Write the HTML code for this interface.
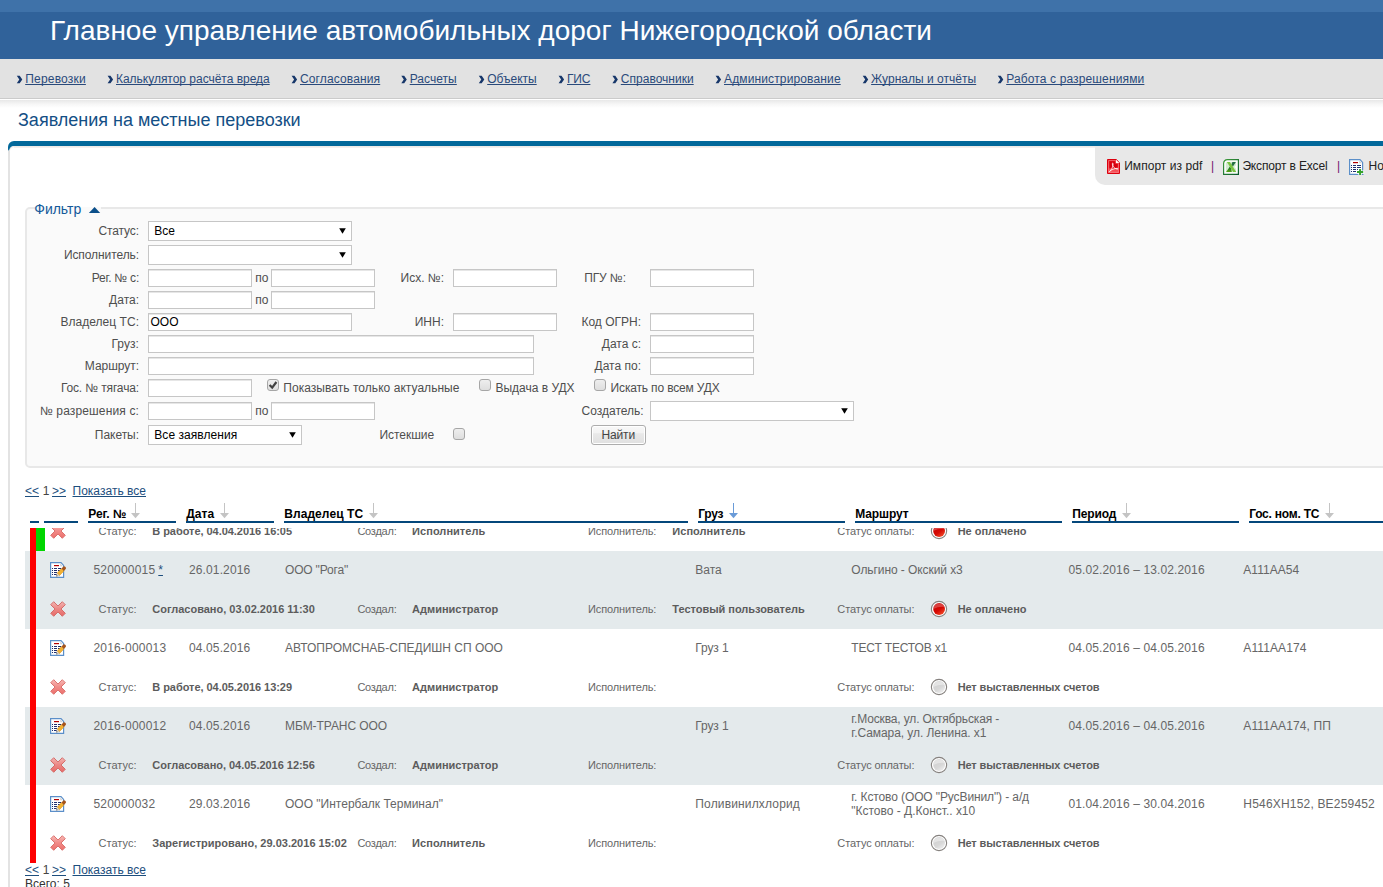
<!DOCTYPE html>
<html lang="ru">
<head>
<meta charset="utf-8">
<title>Заявления на местные перевозки</title>
<style>
*{box-sizing:border-box}
html,body{margin:0;padding:0}
body{width:1383px;height:887px;overflow:hidden;position:relative;background:#fff;font-family:"Liberation Sans",Arial,sans-serif;font-size:12px;color:#444}
.a,.t{position:absolute;white-space:nowrap}
.t{line-height:14px}
a.t,.t a{color:#1d4e7d;text-decoration:underline;text-decoration-skip-ink:none}
#top1{left:0;top:0;width:1383px;height:12px;background:#3f72a9}
#top2{left:0;top:12px;width:1383px;height:47px;background:#30629a}
#nav{left:0;top:59px;width:1383px;height:40px;background:#e2e2e2;border-bottom:1px solid #cbcbcb}
#navsh{left:0;top:100px;width:1383px;height:8px;background:linear-gradient(#e8e8e8,#f6f6f6 50%,#fff)}
a.nv{color:#2a4a7b}
#panel{left:8px;top:150px;width:2px;height:760px;background:#e3e3e3}
#ptop{left:16px;top:141px;width:1380px;height:5px;background:#02689a}
#ptop2{left:14px;top:146px;width:1081px;height:2px;background:linear-gradient(#ebe6e3,#f6f3f2)}
#tb{left:1095px;top:146px;width:300px;height:39px;background:#e8e8e8;border-radius:0 0 0 10px}
#fs{left:25px;top:207px;width:1400px;height:261px;border:2px solid #e8e8e8;border-radius:5px;background:#fafafa}
#lgbg{left:35px;top:207px;width:65.5px;height:2px;background:#fafafa}
.in{position:absolute;background:#fff;border:1px solid #c6c6c6;height:18px;box-shadow:inset 0 1px 0 #e6e6e6}
.sel{position:absolute;background:#fff;border:1px solid #c6c6c6;height:20px}
.sel svg{position:absolute;right:5px;top:6px}
.cb{position:absolute;width:12px;height:12px;border:1px solid #a6a6a6;border-radius:3px;background:linear-gradient(#eeeeee,#dedede)}
#btn{left:591px;top:425px;width:55px;height:20px;border:1px solid #adadad;border-radius:3px;box-shadow:inset 0 0 0 1px #fff;background:linear-gradient(#f8f8f8 0%,#f3f3f3 40%,#e9e9e9 42%,#e0e0e0 100%)}
.hl{position:absolute;top:521px;height:2px;background:#04477b}
#scr{left:0;top:528px;width:1383px;height:359px;overflow:hidden}
.g{position:absolute;left:25px;width:1400px;height:78px;background:#e4eaec}
.ic{position:absolute;display:block}
</style>
</head>
<body>
<div class="a" id="top1"></div>
<div class="a" id="top2"></div>
<div class="a" id="nav"></div>
<div class="a" id="navsh"></div>
<div class="a" id="panel"></div>
<div class="a" id="ptop"></div>
<div class="a" id="ptop2"></div>
<svg class="ic" style="left:8px;top:141px" width="8" height="10" viewBox="0 0 8 10"><path d="M0 10V7.5Q0.8 5.4 3 5.6L3.6 6.6Q2 7 2 10Z" fill="#e3e3e3"/><path d="M0.3 9.4Q-0.2 8 0 6A6 6 0 0 1 6 0H8V5H6.4Q2.4 5 1.4 8.2Q1 9.4 0.3 9.4Z" fill="#02689a"/><path d="M8 5.5H6.4Q3.4 5.6 2.3 8" fill="none" stroke="#eeeae8" stroke-width="1"/></svg>
<div class="a" id="tb"></div>
<div class="a" id="fs"></div>
<div class="a" id="lgbg"></div>
<svg class="ic" style="left:16px;top:75px" width="7" height="9" viewBox="0 0 7 9"><g transform="translate(0.8 0.65)"><path d="M0 0H2.9L5.5 3.75L2.9 7.5H0L2.5 3.75Z" fill="#17376a"/></g></svg>
<svg class="ic" style="left:107px;top:75px" width="7" height="9" viewBox="0 0 7 9"><g transform="translate(0.6 0.65)"><path d="M0 0H2.9L5.5 3.75L2.9 7.5H0L2.5 3.75Z" fill="#17376a"/></g></svg>
<svg class="ic" style="left:291px;top:75px" width="7" height="9" viewBox="0 0 7 9"><g transform="translate(0.6 0.65)"><path d="M0 0H2.9L5.5 3.75L2.9 7.5H0L2.5 3.75Z" fill="#17376a"/></g></svg>
<svg class="ic" style="left:401px;top:75px" width="7" height="9" viewBox="0 0 7 9"><g transform="translate(0.3 0.65)"><path d="M0 0H2.9L5.5 3.75L2.9 7.5H0L2.5 3.75Z" fill="#17376a"/></g></svg>
<svg class="ic" style="left:478px;top:75px" width="7" height="9" viewBox="0 0 7 9"><g transform="translate(0.8 0.65)"><path d="M0 0H2.9L5.5 3.75L2.9 7.5H0L2.5 3.75Z" fill="#17376a"/></g></svg>
<svg class="ic" style="left:558px;top:75px" width="7" height="9" viewBox="0 0 7 9"><g transform="translate(0.6 0.65)"><path d="M0 0H2.9L5.5 3.75L2.9 7.5H0L2.5 3.75Z" fill="#17376a"/></g></svg>
<svg class="ic" style="left:612px;top:75px" width="7" height="9" viewBox="0 0 7 9"><g transform="translate(0.4 0.65)"><path d="M0 0H2.9L5.5 3.75L2.9 7.5H0L2.5 3.75Z" fill="#17376a"/></g></svg>
<svg class="ic" style="left:715px;top:75px" width="7" height="9" viewBox="0 0 7 9"><g transform="translate(0.6 0.65)"><path d="M0 0H2.9L5.5 3.75L2.9 7.5H0L2.5 3.75Z" fill="#17376a"/></g></svg>
<svg class="ic" style="left:862px;top:75px" width="7" height="9" viewBox="0 0 7 9"><g transform="translate(0.7 0.65)"><path d="M0 0H2.9L5.5 3.75L2.9 7.5H0L2.5 3.75Z" fill="#17376a"/></g></svg>
<svg class="ic" style="left:997px;top:75px" width="7" height="9" viewBox="0 0 7 9"><g transform="translate(0.8 0.65)"><path d="M0 0H2.9L5.5 3.75L2.9 7.5H0L2.5 3.75Z" fill="#17376a"/></g></svg>
<svg class="ic" style="left:1106px;top:158px" width="15" height="17" viewBox="0 0 15 17">
<defs><linearGradient id="pg" x1="0" y1="0" x2="0" y2="1"><stop offset="0" stop-color="#e8202a"/><stop offset="0.6" stop-color="#f03c44"/><stop offset="1" stop-color="#fa6066"/></linearGradient></defs>
<path d="M1.5 1.5H10.2L13.5 4.8V15.5H1.5Z" fill="url(#pg)" stroke="#dc000e" stroke-width="1"/>
<path d="M2.6 2.6H9.6V5.4H12.4V14.4H2.6Z" fill="none" stroke="#f6868a" stroke-width="0.7" opacity="0.85"/>
<path d="M3.3 3.3H9.4V5.8H11.7V9.6Q7.5 10.6 3.3 10.2Z" fill="#d9000f"/>
<path d="M10 1.7V5H13.3Z" fill="#fff"/>
<path d="M3.4 13.6C5.6 11.6 6.9 9.2 7.1 6C7.2 4.8 6.3 4.8 6.3 6C6.5 8.4 8 10.4 11.2 11.2C12.2 11.4 12.2 10.4 11 10.4C8.6 10.5 5.4 11.6 3.4 13.6Z" fill="none" stroke="#fff" stroke-width="0.85" stroke-linejoin="round" opacity="0.92"/>
</svg>
<svg class="ic" style="left:1223px;top:159px" width="16" height="16" viewBox="0 0 16 16">
<defs><linearGradient id="xg" x1="0" y1="0" x2="1" y2="1"><stop offset="0" stop-color="#3f9c3c"/><stop offset="1" stop-color="#0a5a2c"/></linearGradient>
<linearGradient id="xg2" x1="0" y1="0" x2="0" y2="1"><stop offset="0" stop-color="#0c6a2c"/><stop offset="1" stop-color="#58a414"/></linearGradient></defs>
<path d="M4.4 0.6H15.4V15.4H0.6V4.4Q0.8 0.8 4.4 0.6Z" fill="#fff" stroke="url(#xg)" stroke-width="1.2"/>
<path d="M2.8 4.6Q3 3 4.6 2.8H13.1V13.2H2.8Z" fill="#d3ebd0"/>
<path d="M9.4 3.1H12.9L9.9 7.4L8.4 5.4Z" fill="#246f42"/>
<path d="M6.9 7.6L8.3 9.8L8.8 12.9H3.1Z" fill="url(#xg2)"/>
<path d="M3.9 2.95H6.9L13.2 12.9H10.2Z" fill="#79c440"/>
<path d="M11.2 8L13.7 5.6V10.4Z" fill="#fff" opacity="0.85"/>
</svg>
<svg class="ic" style="left:1349px;top:159px" width="16" height="16" viewBox="0 0 16 16">
<path d="M0.6 0.6H11L13.6 3.4V15.4H0.6Z" fill="#fff" stroke="#5b8fc9" stroke-width="1.2"/>
<path d="M10.2 1.2V4.2H13Z" fill="#d4d4d4"/>
<rect x="4" y="3" width="5" height="1.2" fill="#b30000"/><rect x="2" y="6" width="1" height="1" fill="#1f2f6f"/><rect x="4" y="6" width="3" height="1" fill="#1f2f6f"/><rect x="2" y="8" width="1" height="1" fill="#1f2f6f"/><rect x="4" y="8" width="3" height="1" fill="#1f2f6f"/><rect x="2" y="10" width="1" height="1" fill="#1f2f6f"/><rect x="4" y="10" width="3" height="1" fill="#1f2f6f"/><rect x="2" y="12" width="1" height="1" fill="#1f2f6f"/><rect x="4" y="12" width="3" height="1" fill="#1f2f6f"/>
<rect x="8" y="6" width="4" height="1" fill="#1f2f6f"/><rect x="8" y="8" width="4" height="1" fill="#1f2f6f"/><rect x="8" y="10" width="1" height="1" fill="#1f2f6f"/>
<path d="M9.4 9.4H12.8V11.4H15.2V14.8H12.8V16.5H9.4V14.8H7.6V11.4H9.4Z" fill="#fff"/>
<path d="M10.1 10H12.1V12.1H14.2V14.1H12.1V16H10.1V14.1H8V12.1H10.1Z" fill="#36a22e"/>
<rect x="13.2" y="15" width="1.2" height="1" fill="#5b8fc9"/>
</svg>
<svg class="ic" style="left:88px;top:206px" width="13" height="8" viewBox="0 0 13 8"><g transform="translate(0.9 0.9)"><path d="M0 6.2L5.65 0L11.3 6.2Z" fill="#0b4f8a"/></g></svg>
<div class="sel" style="left:148px;top:221px;width:204px"><svg width="7" height="6" viewBox="0 0 7 6"><path d="M0.2 0.3H6.8L3.5 5.8Z" fill="#000"/></svg></div>
<div class="sel" style="left:148px;top:245px;width:204px"><svg width="7" height="6" viewBox="0 0 7 6"><path d="M0.2 0.3H6.8L3.5 5.8Z" fill="#000"/></svg></div>
<div class="in" style="left:148px;top:269px;width:104px"></div>
<div class="in" style="left:271px;top:269px;width:104px"></div>
<div class="in" style="left:453px;top:269px;width:104px"></div>
<div class="in" style="left:650px;top:269px;width:104px"></div>
<div class="in" style="left:148px;top:291px;width:104px"></div>
<div class="in" style="left:271px;top:291px;width:104px"></div>
<div class="in" style="left:148px;top:313px;width:204px"></div>
<div class="in" style="left:453px;top:313px;width:104px"></div>
<div class="in" style="left:650px;top:313px;width:104px"></div>
<div class="in" style="left:148px;top:335px;width:386px"></div>
<div class="in" style="left:650px;top:335px;width:104px"></div>
<div class="in" style="left:148px;top:357px;width:386px"></div>
<div class="in" style="left:650px;top:357px;width:104px"></div>
<div class="in" style="left:148px;top:379px;width:104px"></div>
<div class="in" style="left:148px;top:402px;width:104px"></div>
<div class="in" style="left:271px;top:402px;width:104px"></div>
<div class="sel" style="left:148px;top:425px;width:154px"><svg width="7" height="6" viewBox="0 0 7 6"><path d="M0.2 0.3H6.8L3.5 5.8Z" fill="#000"/></svg></div>
<div class="sel" style="left:650px;top:401px;width:204px"><svg width="7" height="6" viewBox="0 0 7 6"><path d="M0.2 0.3H6.8L3.5 5.8Z" fill="#000"/></svg></div>
<div class="cb" style="left:267px;top:379px"><svg width="10" height="10" viewBox="0 0 10 10" style="display:block"><path d="M1.6 5L4.2 7.6L8.4 2" fill="none" stroke="#404040" stroke-width="2.2"/></svg></div>
<div class="cb" style="left:479px;top:379px"></div>
<div class="cb" style="left:594px;top:379px"></div>
<div class="cb" style="left:453px;top:428px"></div>
<div class="a" id="btn"></div>
<div class="hl" style="left:30px;width:9px"></div>
<div class="hl" style="left:44px;width:34px"></div>
<div class="hl" style="left:88px;width:88px"></div>
<svg class="ic" style="left:131px;top:503px" width="10" height="16" viewBox="0 0 10 16"><rect x="4" y="0" width="1" height="12" fill="#c4c4c4"/><path d="M0 10H9L4.5 15.3Z" fill="#c4c4c4"/></svg>
<div class="hl" style="left:186px;width:88px"></div>
<svg class="ic" style="left:220px;top:503px" width="10" height="16" viewBox="0 0 10 16"><rect x="4" y="0" width="1" height="12" fill="#c4c4c4"/><path d="M0 10H9L4.5 15.3Z" fill="#c4c4c4"/></svg>
<div class="hl" style="left:284px;width:404px"></div>
<svg class="ic" style="left:369px;top:503px" width="10" height="16" viewBox="0 0 10 16"><rect x="4" y="0" width="1" height="12" fill="#c4c4c4"/><path d="M0 10H9L4.5 15.3Z" fill="#c4c4c4"/></svg>
<div class="hl" style="left:698px;width:147px"></div>
<svg class="ic" style="left:729px;top:503px" width="10" height="16" viewBox="0 0 10 16"><rect x="4" y="0" width="1" height="12" fill="#6a9bd8"/><path d="M0 10H9L4.5 15.3Z" fill="#6a9bd8"/></svg>
<div class="hl" style="left:855px;width:207px"></div>
<div class="hl" style="left:1072px;width:167px"></div>
<svg class="ic" style="left:1122px;top:503px" width="10" height="16" viewBox="0 0 10 16"><rect x="4" y="0" width="1" height="12" fill="#c4c4c4"/><path d="M0 10H9L4.5 15.3Z" fill="#c4c4c4"/></svg>
<div class="hl" style="left:1249px;width:151px"></div>
<svg class="ic" style="left:1325px;top:503px" width="10" height="16" viewBox="0 0 10 16"><rect x="4" y="0" width="1" height="12" fill="#c4c4c4"/><path d="M0 10H9L4.5 15.3Z" fill="#c4c4c4"/></svg>
<div class="g" style="top:551px"></div>
<div class="g" style="top:707px"></div>
<div class="a" style="left:30px;top:528px;width:6px;height:335px;background:#fe0000"></div>
<div class="a" style="left:36px;top:528px;width:9px;height:23px;background:#00d600"></div>
<svg class="ic" style="left:50px;top:562px" width="17" height="16" viewBox="0 0 17 16">
<path d="M0.6 0.6H11L13.6 3.4V15.4H0.6Z" fill="#fff" stroke="#5b8fc9" stroke-width="1.2"/>
<path d="M10.2 1.2V4.2H13Z" fill="#d4d4d4"/>
<rect x="4" y="3" width="5" height="1.2" fill="#b30000"/><rect x="2" y="6" width="1" height="1" fill="#1f2f6f"/><rect x="4" y="6" width="3" height="1" fill="#1f2f6f"/><rect x="2" y="8" width="1" height="1" fill="#1f2f6f"/><rect x="4" y="8" width="3" height="1" fill="#1f2f6f"/><rect x="2" y="10" width="1" height="1" fill="#1f2f6f"/><rect x="4" y="10" width="3" height="1" fill="#1f2f6f"/><rect x="2" y="12" width="1" height="1" fill="#1f2f6f"/><rect x="4" y="12" width="3" height="1" fill="#1f2f6f"/>
<rect x="8" y="6" width="3" height="1" fill="#1f2f6f"/><rect x="8" y="8" width="2" height="1" fill="#1f2f6f"/>
<path d="M6.96 11.34L11.5 6.55L13.96 8.89L9.42 13.68Z" fill="#f3b234" stroke="#d28c14" stroke-width="0.5"/>
<path d="M11.5 6.55L13.43 4.52Q14.4 3.9 15.2 4.8Q16.4 5.9 15.89 6.86L13.96 8.89Z" fill="#a5541b"/>
<path d="M6.96 11.34L9.42 13.68L6.4 14.4Z" fill="#f4ead8" stroke="#a0a0a0" stroke-width="0.4"/>
<path d="M6.4 14.4L6.75 13.1L7.7 14.05Z" fill="#333"/>
</svg>
<svg class="ic" style="left:50px;top:601px;opacity:0.8" width="16" height="16" viewBox="0 0 16 16">
<defs><linearGradient id="xd551" x1="0" y1="0" x2="0" y2="1"><stop offset="0" stop-color="#f6a8a4"/><stop offset="0.5" stop-color="#ee6e6a"/><stop offset="1" stop-color="#e84c48"/></linearGradient></defs>
<path d="M3.7 0.7L8 5L12.3 0.7L15.3 3.7L11 8L15.3 12.3L12.3 15.3L8 11L3.7 15.3L0.7 12.3L5 8L0.7 3.7Z" fill="url(#xd551)" stroke="#cf4440" stroke-width="0.9" stroke-linejoin="round"/>
</svg>
<svg class="ic" style="left:930px;top:600px" width="18" height="18" viewBox="0 0 18 18">
<defs><linearGradient id="bl551" x1="0.2" y1="0.1" x2="0.8" y2="0.95"><stop offset="0" stop-color="#c80000"/><stop offset="0.55" stop-color="#d60a04"/><stop offset="1" stop-color="#f04a28"/></linearGradient></defs>
<circle cx="9" cy="9" r="7.65" fill="#fff" stroke="#86827f" stroke-width="1.1"/>
<circle cx="9.1" cy="9" r="5.9" fill="url(#bl551)"/>
<path d="M3.4 8.9A5.8 5.8 0 0 1 14.5 6.9Q8.5 6.3 3.4 8.9Z" fill="#fff" opacity="0.24"/>
</svg>
<svg class="ic" style="left:50px;top:640px" width="17" height="16" viewBox="0 0 17 16">
<path d="M0.6 0.6H11L13.6 3.4V15.4H0.6Z" fill="#fff" stroke="#5b8fc9" stroke-width="1.2"/>
<path d="M10.2 1.2V4.2H13Z" fill="#d4d4d4"/>
<rect x="4" y="3" width="5" height="1.2" fill="#b30000"/><rect x="2" y="6" width="1" height="1" fill="#1f2f6f"/><rect x="4" y="6" width="3" height="1" fill="#1f2f6f"/><rect x="2" y="8" width="1" height="1" fill="#1f2f6f"/><rect x="4" y="8" width="3" height="1" fill="#1f2f6f"/><rect x="2" y="10" width="1" height="1" fill="#1f2f6f"/><rect x="4" y="10" width="3" height="1" fill="#1f2f6f"/><rect x="2" y="12" width="1" height="1" fill="#1f2f6f"/><rect x="4" y="12" width="3" height="1" fill="#1f2f6f"/>
<rect x="8" y="6" width="3" height="1" fill="#1f2f6f"/><rect x="8" y="8" width="2" height="1" fill="#1f2f6f"/>
<path d="M6.96 11.34L11.5 6.55L13.96 8.89L9.42 13.68Z" fill="#f3b234" stroke="#d28c14" stroke-width="0.5"/>
<path d="M11.5 6.55L13.43 4.52Q14.4 3.9 15.2 4.8Q16.4 5.9 15.89 6.86L13.96 8.89Z" fill="#a5541b"/>
<path d="M6.96 11.34L9.42 13.68L6.4 14.4Z" fill="#f4ead8" stroke="#a0a0a0" stroke-width="0.4"/>
<path d="M6.4 14.4L6.75 13.1L7.7 14.05Z" fill="#333"/>
</svg>
<svg class="ic" style="left:50px;top:679px;opacity:0.8" width="16" height="16" viewBox="0 0 16 16">
<defs><linearGradient id="xd629" x1="0" y1="0" x2="0" y2="1"><stop offset="0" stop-color="#f6a8a4"/><stop offset="0.5" stop-color="#ee6e6a"/><stop offset="1" stop-color="#e84c48"/></linearGradient></defs>
<path d="M3.7 0.7L8 5L12.3 0.7L15.3 3.7L11 8L15.3 12.3L12.3 15.3L8 11L3.7 15.3L0.7 12.3L5 8L0.7 3.7Z" fill="url(#xd629)" stroke="#cf4440" stroke-width="0.9" stroke-linejoin="round"/>
</svg>
<svg class="ic" style="left:930px;top:678px" width="18" height="18" viewBox="0 0 18 18">
<defs><linearGradient id="bl629" x1="0.2" y1="0.1" x2="0.8" y2="0.95"><stop offset="0" stop-color="#d0d0d0"/><stop offset="0.6" stop-color="#d8d8d8"/><stop offset="1" stop-color="#ececec"/></linearGradient></defs>
<circle cx="9" cy="9" r="7.65" fill="#fff" stroke="#86827f" stroke-width="1.1"/>
<circle cx="9.1" cy="9" r="5.9" fill="url(#bl629)"/>
<path d="M3.4 8.9A5.8 5.8 0 0 1 14.5 6.9Q8.5 6.3 3.4 8.9Z" fill="#fff" opacity="0.4"/>
</svg>
<svg class="ic" style="left:50px;top:718px" width="17" height="16" viewBox="0 0 17 16">
<path d="M0.6 0.6H11L13.6 3.4V15.4H0.6Z" fill="#fff" stroke="#5b8fc9" stroke-width="1.2"/>
<path d="M10.2 1.2V4.2H13Z" fill="#d4d4d4"/>
<rect x="4" y="3" width="5" height="1.2" fill="#b30000"/><rect x="2" y="6" width="1" height="1" fill="#1f2f6f"/><rect x="4" y="6" width="3" height="1" fill="#1f2f6f"/><rect x="2" y="8" width="1" height="1" fill="#1f2f6f"/><rect x="4" y="8" width="3" height="1" fill="#1f2f6f"/><rect x="2" y="10" width="1" height="1" fill="#1f2f6f"/><rect x="4" y="10" width="3" height="1" fill="#1f2f6f"/><rect x="2" y="12" width="1" height="1" fill="#1f2f6f"/><rect x="4" y="12" width="3" height="1" fill="#1f2f6f"/>
<rect x="8" y="6" width="3" height="1" fill="#1f2f6f"/><rect x="8" y="8" width="2" height="1" fill="#1f2f6f"/>
<path d="M6.96 11.34L11.5 6.55L13.96 8.89L9.42 13.68Z" fill="#f3b234" stroke="#d28c14" stroke-width="0.5"/>
<path d="M11.5 6.55L13.43 4.52Q14.4 3.9 15.2 4.8Q16.4 5.9 15.89 6.86L13.96 8.89Z" fill="#a5541b"/>
<path d="M6.96 11.34L9.42 13.68L6.4 14.4Z" fill="#f4ead8" stroke="#a0a0a0" stroke-width="0.4"/>
<path d="M6.4 14.4L6.75 13.1L7.7 14.05Z" fill="#333"/>
</svg>
<svg class="ic" style="left:50px;top:757px;opacity:0.8" width="16" height="16" viewBox="0 0 16 16">
<defs><linearGradient id="xd707" x1="0" y1="0" x2="0" y2="1"><stop offset="0" stop-color="#f6a8a4"/><stop offset="0.5" stop-color="#ee6e6a"/><stop offset="1" stop-color="#e84c48"/></linearGradient></defs>
<path d="M3.7 0.7L8 5L12.3 0.7L15.3 3.7L11 8L15.3 12.3L12.3 15.3L8 11L3.7 15.3L0.7 12.3L5 8L0.7 3.7Z" fill="url(#xd707)" stroke="#cf4440" stroke-width="0.9" stroke-linejoin="round"/>
</svg>
<svg class="ic" style="left:930px;top:756px" width="18" height="18" viewBox="0 0 18 18">
<defs><linearGradient id="bl707" x1="0.2" y1="0.1" x2="0.8" y2="0.95"><stop offset="0" stop-color="#d0d0d0"/><stop offset="0.6" stop-color="#d8d8d8"/><stop offset="1" stop-color="#ececec"/></linearGradient></defs>
<circle cx="9" cy="9" r="7.65" fill="#fff" stroke="#86827f" stroke-width="1.1"/>
<circle cx="9.1" cy="9" r="5.9" fill="url(#bl707)"/>
<path d="M3.4 8.9A5.8 5.8 0 0 1 14.5 6.9Q8.5 6.3 3.4 8.9Z" fill="#fff" opacity="0.4"/>
</svg>
<svg class="ic" style="left:50px;top:796px" width="17" height="16" viewBox="0 0 17 16">
<path d="M0.6 0.6H11L13.6 3.4V15.4H0.6Z" fill="#fff" stroke="#5b8fc9" stroke-width="1.2"/>
<path d="M10.2 1.2V4.2H13Z" fill="#d4d4d4"/>
<rect x="4" y="3" width="5" height="1.2" fill="#b30000"/><rect x="2" y="6" width="1" height="1" fill="#1f2f6f"/><rect x="4" y="6" width="3" height="1" fill="#1f2f6f"/><rect x="2" y="8" width="1" height="1" fill="#1f2f6f"/><rect x="4" y="8" width="3" height="1" fill="#1f2f6f"/><rect x="2" y="10" width="1" height="1" fill="#1f2f6f"/><rect x="4" y="10" width="3" height="1" fill="#1f2f6f"/><rect x="2" y="12" width="1" height="1" fill="#1f2f6f"/><rect x="4" y="12" width="3" height="1" fill="#1f2f6f"/>
<rect x="8" y="6" width="3" height="1" fill="#1f2f6f"/><rect x="8" y="8" width="2" height="1" fill="#1f2f6f"/>
<path d="M6.96 11.34L11.5 6.55L13.96 8.89L9.42 13.68Z" fill="#f3b234" stroke="#d28c14" stroke-width="0.5"/>
<path d="M11.5 6.55L13.43 4.52Q14.4 3.9 15.2 4.8Q16.4 5.9 15.89 6.86L13.96 8.89Z" fill="#a5541b"/>
<path d="M6.96 11.34L9.42 13.68L6.4 14.4Z" fill="#f4ead8" stroke="#a0a0a0" stroke-width="0.4"/>
<path d="M6.4 14.4L6.75 13.1L7.7 14.05Z" fill="#333"/>
</svg>
<svg class="ic" style="left:50px;top:835px;opacity:0.8" width="16" height="16" viewBox="0 0 16 16">
<defs><linearGradient id="xd785" x1="0" y1="0" x2="0" y2="1"><stop offset="0" stop-color="#f6a8a4"/><stop offset="0.5" stop-color="#ee6e6a"/><stop offset="1" stop-color="#e84c48"/></linearGradient></defs>
<path d="M3.7 0.7L8 5L12.3 0.7L15.3 3.7L11 8L15.3 12.3L12.3 15.3L8 11L3.7 15.3L0.7 12.3L5 8L0.7 3.7Z" fill="url(#xd785)" stroke="#cf4440" stroke-width="0.9" stroke-linejoin="round"/>
</svg>
<svg class="ic" style="left:930px;top:834px" width="18" height="18" viewBox="0 0 18 18">
<defs><linearGradient id="bl785" x1="0.2" y1="0.1" x2="0.8" y2="0.95"><stop offset="0" stop-color="#d0d0d0"/><stop offset="0.6" stop-color="#d8d8d8"/><stop offset="1" stop-color="#ececec"/></linearGradient></defs>
<circle cx="9" cy="9" r="7.65" fill="#fff" stroke="#86827f" stroke-width="1.1"/>
<circle cx="9.1" cy="9" r="5.9" fill="url(#bl785)"/>
<path d="M3.4 8.9A5.8 5.8 0 0 1 14.5 6.9Q8.5 6.3 3.4 8.9Z" fill="#fff" opacity="0.4"/>
</svg>
<div class="a" id="scr">
<svg class="ic" style="left:50px;top:-5px;opacity:0.8" width="16" height="16" viewBox="0 0 16 16">
<defs><linearGradient id="xd473" x1="0" y1="0" x2="0" y2="1"><stop offset="0" stop-color="#f6a8a4"/><stop offset="0.5" stop-color="#ee6e6a"/><stop offset="1" stop-color="#e84c48"/></linearGradient></defs>
<path d="M3.7 0.7L8 5L12.3 0.7L15.3 3.7L11 8L15.3 12.3L12.3 15.3L8 11L3.7 15.3L0.7 12.3L5 8L0.7 3.7Z" fill="url(#xd473)" stroke="#cf4440" stroke-width="0.9" stroke-linejoin="round"/>
</svg>
<svg class="ic" style="left:930px;top:-6px" width="18" height="18" viewBox="0 0 18 18">
<defs><linearGradient id="bl473" x1="0.2" y1="0.1" x2="0.8" y2="0.95"><stop offset="0" stop-color="#c80000"/><stop offset="0.55" stop-color="#d60a04"/><stop offset="1" stop-color="#f04a28"/></linearGradient></defs>
<circle cx="9" cy="9" r="7.65" fill="#fff" stroke="#86827f" stroke-width="1.1"/>
<circle cx="9.1" cy="9" r="5.9" fill="url(#bl473)"/>
<path d="M3.4 8.9A5.8 5.8 0 0 1 14.5 6.9Q8.5 6.3 3.4 8.9Z" fill="#fff" opacity="0.24"/>
</svg>
<div class="t" style="left:98.5px;top:-4.5px;font-size:11px;color:#666;letter-spacing:0.022px">Статус:</div>
<div class="t" style="left:152.3px;top:-4.5px;font-size:11px;font-weight:700;color:#5c5c5c;letter-spacing:-0.048px">В работе, 04.04.2016 16:05</div>
<div class="t" style="left:357.4px;top:-4.5px;font-size:11px;color:#666;letter-spacing:-0.238px">Создал:</div>
<div class="t" style="left:412.1px;top:-4.5px;font-size:11px;font-weight:700;color:#5c5c5c;letter-spacing:0.039px">Исполнитель</div>
<div class="t" style="left:588px;top:-4.5px;font-size:11px;color:#666;letter-spacing:-0.129px">Исполнитель:</div>
<div class="t" style="left:672.3px;top:-4.5px;font-size:11px;font-weight:700;color:#5c5c5c;letter-spacing:0.039px">Исполнитель</div>
<div class="t" style="left:837.3px;top:-4.5px;font-size:11px;color:#666;letter-spacing:-0.079px">Статус оплаты:</div>
<div class="t" style="left:957.7px;top:-4.5px;font-size:11px;font-weight:700;color:#5c5c5c;letter-spacing:-0.035px">Не оплачено</div>
</div>
<div class="t" style="left:50px;top:24px;font-size:28px;color:#fff;line-height:32px;margin-top:-9px">Главное управление автомобильных дорог Нижегородской области</div>
<a class="t nv" style="left:25.2px;top:72px;letter-spacing:0.201px">Перевозки</a>
<a class="t nv" style="left:116px;top:72px;letter-spacing:-0.021px">Калькулятор расчёта вреда</a>
<a class="t nv" style="left:300px;top:72px;letter-spacing:0.126px">Согласования</a>
<a class="t nv" style="left:409.7px;top:72px;letter-spacing:0.043px">Расчеты</a>
<a class="t nv" style="left:487.2px;top:72px">Объекты</a>
<a class="t nv" style="left:567px;top:72px;letter-spacing:-0.132px">ГИС</a>
<a class="t nv" style="left:620.8px;top:72px;letter-spacing:0.018px">Справочники</a>
<a class="t nv" style="left:724px;top:72px;letter-spacing:0.133px">Администрирование</a>
<a class="t nv" style="left:871.1px;top:72px;letter-spacing:0.022px">Журналы и отчёты</a>
<a class="t nv" style="left:1006.2px;top:72px;letter-spacing:0.132px">Работа с разрешениями</a>
<div class="t" style="left:18px;top:113px;font-size:18px;color:#144f85;line-height:22px;margin-top:-4px">Заявления на местные перевозки</div>
<div class="t" style="left:1124.2px;top:159px;color:#222;letter-spacing:0.045px">Импорт из pdf</div>
<div class="t" style="left:1210.9px;top:159px;color:#701070">|</div>
<div class="t" style="left:1242.4px;top:159px;color:#222;letter-spacing:-0.159px">Экспорт в Excel</div>
<div class="t" style="left:1336.9px;top:159px;color:#701070">|</div>
<div class="t" style="left:1368.5px;top:159px;color:#222">Новое заявление</div>
<div class="t" style="left:34.3px;top:202px;font-size:14px;color:#14599a;letter-spacing:-0.022px;line-height:16px;margin-top:-1px">Фильтр</div>
<div class="t" style="left:98.5px;top:224px;color:#4e4e4e;letter-spacing:-0.112px">Статус:</div>
<div class="t" style="left:63.9px;top:248px;color:#4e4e4e;letter-spacing:-0.083px">Исполнитель:</div>
<div class="t" style="left:91.8px;top:271px;color:#4e4e4e;letter-spacing:-0.231px">Рег. № с:</div>
<div class="t" style="left:109.1px;top:293px;color:#4e4e4e">Дата:</div>
<div class="t" style="left:60.5px;top:315px;color:#4e4e4e;letter-spacing:0.027px">Владелец ТС:</div>
<div class="t" style="left:111.4px;top:337px;color:#4e4e4e;letter-spacing:0.079px">Груз:</div>
<div class="t" style="left:84.8px;top:359px;color:#4e4e4e;letter-spacing:-0.036px">Маршрут:</div>
<div class="t" style="left:60.9px;top:381px;color:#4e4e4e;letter-spacing:-0.138px">Гос. № тягача:</div>
<div class="t" style="left:39.9px;top:404px;color:#4e4e4e;letter-spacing:0.135px">№ разрешения с:</div>
<div class="t" style="left:94.8px;top:428px;color:#4e4e4e;letter-spacing:-0.032px">Пакеты:</div>
<div class="t" style="left:154.3px;top:224px;color:#000">Все</div>
<div class="t" style="left:154.3px;top:428px;color:#000;letter-spacing:0.054px">Все заявления</div>
<div class="t" style="left:150.5px;top:315px;color:#000">ООО</div>
<div class="t" style="left:255.2px;top:271px;color:#4e4e4e">по</div>
<div class="t" style="left:255.2px;top:293px;color:#4e4e4e">по</div>
<div class="t" style="left:255.2px;top:404px;color:#4e4e4e">по</div>
<div class="t" style="right:939px;top:271px;color:#4e4e4e">Исх. №:</div>
<div class="t" style="right:939px;top:315px;color:#4e4e4e">ИНН:</div>
<div class="t" style="left:584.2px;top:271px;color:#4e4e4e;letter-spacing:-0.099px">ПГУ №:</div>
<div class="t" style="right:742px;top:315px;color:#4e4e4e">Код ОГРН:</div>
<div class="t" style="right:742px;top:337px;color:#4e4e4e">Дата с:</div>
<div class="t" style="right:742px;top:359px;color:#4e4e4e">Дата по:</div>
<div class="t" style="right:739.3px;top:404px;color:#4e4e4e">Создатель:</div>
<div class="t" style="left:283.3px;top:381px;color:#4e4e4e;letter-spacing:0.041px">Показывать только актуальные</div>
<div class="t" style="left:495.4px;top:381px;color:#4e4e4e">Выдача в УДХ</div>
<div class="t" style="left:610.6px;top:381px;color:#4e4e4e;letter-spacing:-0.159px">Искать по всем УДХ</div>
<div class="t" style="left:379.4px;top:428px;color:#4e4e4e;letter-spacing:-0.028px">Истекшие</div>
<div class="t" style="left:601.4px;top:428px;color:#444;letter-spacing:-0.110px">Найти</div>
<a class="t" style="left:25px;top:484px">&lt;&lt;</a>
<div class="t" style="left:42.7px;top:484px;color:#444">1</div>
<a class="t" style="left:52px;top:484px">&gt;&gt;</a>
<a class="t" style="left:72.5px;top:484px;letter-spacing:0.020px">Показать все</a>
<a class="t" style="left:25px;top:863px">&lt;&lt;</a>
<div class="t" style="left:42.7px;top:863px;color:#444">1</div>
<a class="t" style="left:52px;top:863px">&gt;&gt;</a>
<a class="t" style="left:72.5px;top:863px;letter-spacing:0.020px">Показать все</a>
<div class="t" style="left:25px;top:877px;color:#333">Всего: 5</div>
<div class="t" style="left:88.2px;top:507px;font-weight:700;color:#000;letter-spacing:-0.006px">Рег. №</div>
<div class="t" style="left:186.2px;top:507px;font-weight:700;color:#000;letter-spacing:0.030px">Дата</div>
<div class="t" style="left:284.2px;top:507px;font-weight:700;color:#000;letter-spacing:0.081px">Владелец ТС</div>
<div class="t" style="left:698.2px;top:507px;font-weight:700;color:#000;letter-spacing:-0.200px">Груз</div>
<div class="t" style="left:855.2px;top:507px;font-weight:700;color:#000;letter-spacing:-0.090px">Маршрут</div>
<div class="t" style="left:1072.2px;top:507px;font-weight:700;color:#000;letter-spacing:-0.133px">Период</div>
<div class="t" style="left:1249.2px;top:507px;font-weight:700;color:#000;letter-spacing:-0.224px">Гос. ном. ТС</div>
<div class="t" style="left:93.4px;top:563px;color:#666;letter-spacing:0.214px">520000015</div>
<a class="t" style="left:158.3px;top:563px">*</a>
<div class="t" style="left:189px;top:563px;color:#666;letter-spacing:0.124px">26.01.2016</div>
<div class="t" style="left:285px;top:563px;color:#666;letter-spacing:-0.180px">ООО &quot;Рога&quot;</div>
<div class="t" style="left:695.3px;top:563px;color:#666;letter-spacing:-0.013px">Вата</div>
<div class="t" style="left:851.3px;top:563px;color:#666;letter-spacing:-0.078px">Ольгино - Окский х3</div>
<div class="t" style="left:1068.4px;top:563px;color:#666;letter-spacing:0.123px">05.02.2016 – 13.02.2016</div>
<div class="t" style="left:1243.3px;top:563px;color:#666;letter-spacing:0.036px">А111АА54</div>
<div class="t" style="left:98.5px;top:601.5px;font-size:11px;color:#666;letter-spacing:0.022px">Статус:</div>
<div class="t" style="left:152.3px;top:601.5px;font-size:11px;font-weight:700;color:#5c5c5c;letter-spacing:-0.009px">Согласовано, 03.02.2016 11:30</div>
<div class="t" style="left:357.4px;top:601.5px;font-size:11px;color:#666;letter-spacing:-0.238px">Создал:</div>
<div class="t" style="left:412.1px;top:601.5px;font-size:11px;font-weight:700;color:#5c5c5c;letter-spacing:-0.005px">Администратор</div>
<div class="t" style="left:588px;top:601.5px;font-size:11px;color:#666;letter-spacing:-0.129px">Исполнитель:</div>
<div class="t" style="left:672.3px;top:601.5px;font-size:11px;font-weight:700;color:#5c5c5c;letter-spacing:-0.026px">Тестовый пользователь</div>
<div class="t" style="left:837.3px;top:601.5px;font-size:11px;color:#666;letter-spacing:-0.079px">Статус оплаты:</div>
<div class="t" style="left:957.7px;top:601.5px;font-size:11px;font-weight:700;color:#5c5c5c;letter-spacing:-0.035px">Не оплачено</div>
<div class="t" style="left:93.4px;top:641px;color:#666;letter-spacing:0.197px">2016-000013</div>
<div class="t" style="left:189px;top:641px;color:#666;letter-spacing:0.124px">04.05.2016</div>
<div class="t" style="left:285px;top:641px;color:#666">АВТОПРОМСНАБ-СПЕДИШН СП ООО</div>
<div class="t" style="left:695.3px;top:641px;color:#666;letter-spacing:-0.112px">Груз 1</div>
<div class="t" style="left:851.3px;top:641px;color:#666;letter-spacing:-0.165px">ТЕСТ ТЕСТОВ х1</div>
<div class="t" style="left:1068.4px;top:641px;color:#666;letter-spacing:0.123px">04.05.2016 – 04.05.2016</div>
<div class="t" style="left:1243.3px;top:641px;color:#666;letter-spacing:0.102px">А111АА174</div>
<div class="t" style="left:98.5px;top:679.5px;font-size:11px;color:#666;letter-spacing:0.022px">Статус:</div>
<div class="t" style="left:152.3px;top:679.5px;font-size:11px;font-weight:700;color:#5c5c5c;letter-spacing:-0.048px">В работе, 04.05.2016 13:29</div>
<div class="t" style="left:357.4px;top:679.5px;font-size:11px;color:#666;letter-spacing:-0.238px">Создал:</div>
<div class="t" style="left:412.1px;top:679.5px;font-size:11px;font-weight:700;color:#5c5c5c;letter-spacing:-0.005px">Администратор</div>
<div class="t" style="left:588px;top:679.5px;font-size:11px;color:#666;letter-spacing:-0.129px">Исполнитель:</div>
<div class="t" style="left:837.3px;top:679.5px;font-size:11px;color:#666;letter-spacing:-0.079px">Статус оплаты:</div>
<div class="t" style="left:957.7px;top:679.5px;font-size:11px;font-weight:700;color:#5c5c5c;letter-spacing:-0.122px">Нет выставленных счетов</div>
<div class="t" style="left:93.4px;top:719px;color:#666;letter-spacing:0.197px">2016-000012</div>
<div class="t" style="left:189px;top:719px;color:#666;letter-spacing:0.124px">04.05.2016</div>
<div class="t" style="left:285px;top:719px;color:#666;letter-spacing:-0.083px">МБМ-ТРАНС ООО</div>
<div class="t" style="left:695.3px;top:719px;color:#666;letter-spacing:-0.112px">Груз 1</div>
<div class="t" style="left:1068.4px;top:719px;color:#666;letter-spacing:0.123px">04.05.2016 – 04.05.2016</div>
<div class="t" style="left:1243.3px;top:719px;color:#666;letter-spacing:0.115px">А111АА174, ПП</div>
<div class="t" style="left:98.5px;top:757.5px;font-size:11px;color:#666;letter-spacing:0.022px">Статус:</div>
<div class="t" style="left:152.3px;top:757.5px;font-size:11px;font-weight:700;color:#5c5c5c;letter-spacing:-0.030px">Согласовано, 04.05.2016 12:56</div>
<div class="t" style="left:357.4px;top:757.5px;font-size:11px;color:#666;letter-spacing:-0.238px">Создал:</div>
<div class="t" style="left:412.1px;top:757.5px;font-size:11px;font-weight:700;color:#5c5c5c;letter-spacing:-0.005px">Администратор</div>
<div class="t" style="left:588px;top:757.5px;font-size:11px;color:#666;letter-spacing:-0.129px">Исполнитель:</div>
<div class="t" style="left:837.3px;top:757.5px;font-size:11px;color:#666;letter-spacing:-0.079px">Статус оплаты:</div>
<div class="t" style="left:957.7px;top:757.5px;font-size:11px;font-weight:700;color:#5c5c5c;letter-spacing:-0.122px">Нет выставленных счетов</div>
<div class="t" style="left:93.4px;top:797px;color:#666;letter-spacing:0.214px">520000032</div>
<div class="t" style="left:189px;top:797px;color:#666;letter-spacing:0.124px">29.03.2016</div>
<div class="t" style="left:285px;top:797px;color:#666">ООО &quot;Интербалк Терминал&quot;</div>
<div class="t" style="left:695.3px;top:797px;color:#666;letter-spacing:0.157px">Поливинилхлорид</div>
<div class="t" style="left:1068.4px;top:797px;color:#666;letter-spacing:0.123px">01.04.2016 – 30.04.2016</div>
<div class="t" style="left:1243.3px;top:797px;color:#666;letter-spacing:0.189px">Н546ХН152, ВЕ259452</div>
<div class="t" style="left:98.5px;top:835.5px;font-size:11px;color:#666;letter-spacing:0.022px">Статус:</div>
<div class="t" style="left:152.3px;top:835.5px;font-size:11px;font-weight:700;color:#5c5c5c;letter-spacing:0.012px">Зарегистрировано, 29.03.2016 15:02</div>
<div class="t" style="left:357.4px;top:835.5px;font-size:11px;color:#666;letter-spacing:-0.238px">Создал:</div>
<div class="t" style="left:412.1px;top:835.5px;font-size:11px;font-weight:700;color:#5c5c5c;letter-spacing:0.039px">Исполнитель</div>
<div class="t" style="left:588px;top:835.5px;font-size:11px;color:#666;letter-spacing:-0.129px">Исполнитель:</div>
<div class="t" style="left:837.3px;top:835.5px;font-size:11px;color:#666;letter-spacing:-0.079px">Статус оплаты:</div>
<div class="t" style="left:957.7px;top:835.5px;font-size:11px;font-weight:700;color:#5c5c5c;letter-spacing:-0.122px">Нет выставленных счетов</div>
<div class="t" style="left:851.3px;top:712px;color:#666;letter-spacing:-0.149px">г.Москва, ул. Октябрьская -</div>
<div class="t" style="left:851.3px;top:726px;color:#666;letter-spacing:-0.062px">г.Самара, ул. Ленина. х1</div>
<div class="t" style="left:851.3px;top:790px;color:#666;letter-spacing:-0.112px">г. Кстово (ООО &quot;РусВинил&quot;) - а/д</div>
<div class="t" style="left:851.3px;top:803.7px;color:#666;letter-spacing:-0.010px">&quot;Кстово - Д.Конст.. х10</div>
</body>
</html>
